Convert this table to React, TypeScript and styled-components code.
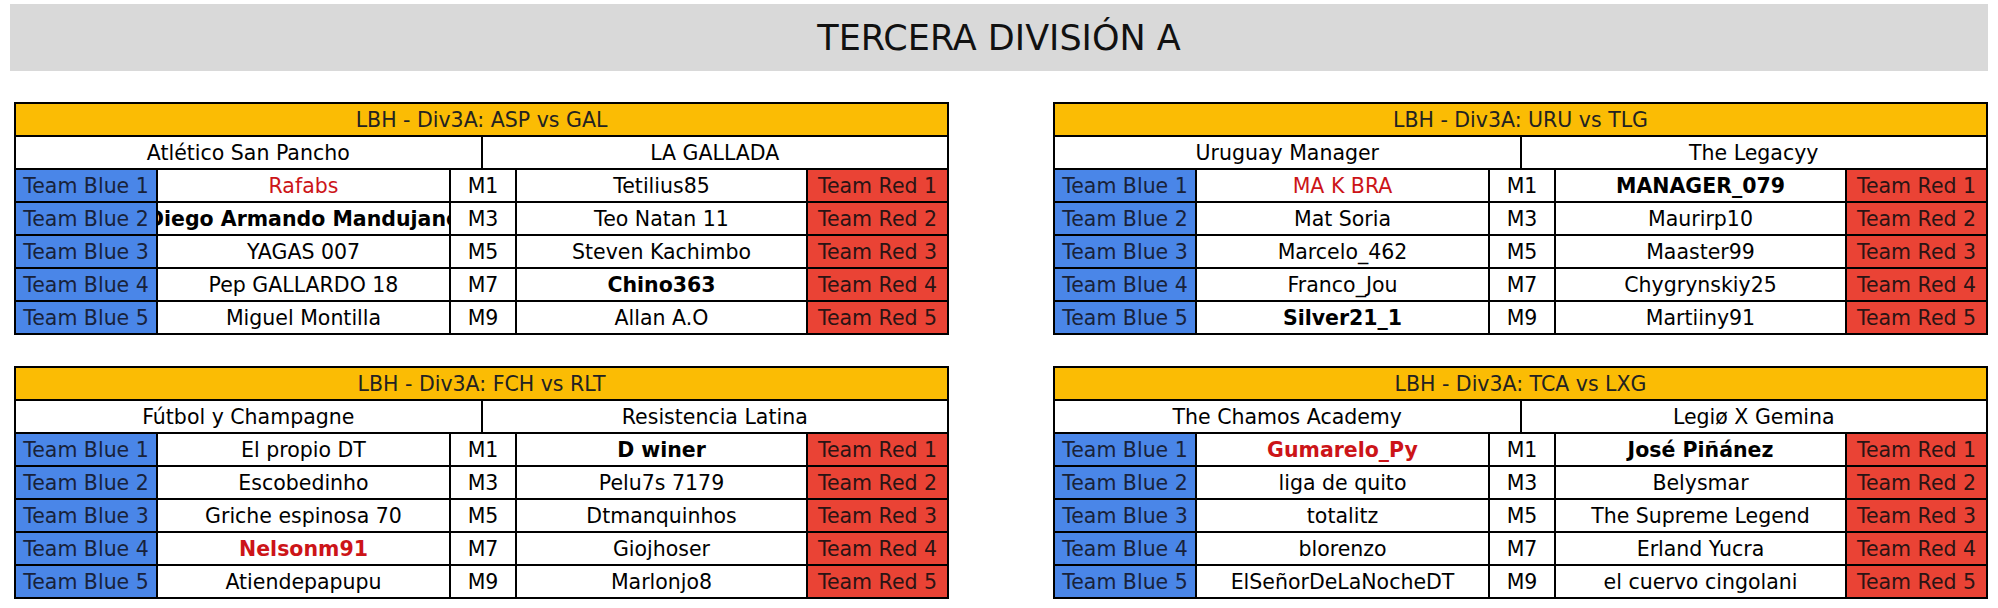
import React from 'react';
import styled, { createGlobalStyle } from 'styled-components';

const GlobalStyle = createGlobalStyle`
  html, body {
    margin: 0;
    padding: 0;
    background: #ffffff;
  }
  body {
    font-family: 'DejaVu Sans', Verdana, sans-serif;
    color: #000;
  }
`;

const Page = styled.div`
  width: 1998px;
  height: 608px;
  box-sizing: border-box;
  padding: 4px 10px 0 10px;
`;

const Banner = styled.div`
  height: 67px;
  background: #d9d9d9;
  display: flex;
  align-items: center;
  justify-content: center;
  font-size: 35px;
  color: #111;
`;

const Grid = styled.div`
  margin-top: 31px;
  padding-left: 4px;
  display: grid;
  grid-template-columns: 935px 935px;
  column-gap: 104px;
  row-gap: 31px;
`;

const Board = styled.div`
  display: grid;
  grid-template-columns: 140px 291px 64px 289px 139px;
  grid-auto-rows: 31px;
  gap: 2px;
  background: #000;
  border: 2px solid #000;
  font-size: 20.5px;
`;

const Cell = styled.div<{ $bg?: string; $color?: string; $bold?: boolean }>`
  display: flex;
  align-items: center;
  justify-content: center;
  overflow: hidden;
  white-space: nowrap;
  background: ${({ $bg }) => $bg || '#ffffff'};
  color: ${({ $color }) => $color || '#000'};
  font-weight: ${({ $bold }) => ($bold ? 700 : 400)};
`;

const TitleCell = styled(Cell)`
  grid-column: 1 / -1;
  background: #fbbc04;
  color: #222;
`;

const TeamRow = styled.div`
  grid-column: 1 / -1;
  display: grid;
  grid-template-columns: 1fr 1fr;
  gap: 2px;
`;

type Player = { name: string; bold?: boolean; red?: boolean };

type Match = {
  code: string;
  home: string;
  away: string;
  blue: Player[];
  redSide: Player[];
};

const BLUE = '#4a86e8';
const RED = '#ea4335';
const RED_TEXT = '#cc1418';

const matches: Match[] = [
  {
    code: 'ASP vs GAL',
    home: 'Atlético San Pancho',
    away: 'LA GALLADA',
    blue: [
      { name: 'Rafabs', red: true },
      { name: 'Diego Armando Mandujano', bold: true },
      { name: 'YAGAS 007' },
      { name: 'Pep GALLARDO 18' },
      { name: 'Miguel Montilla' },
    ],
    redSide: [
      { name: 'Tetilius85' },
      { name: 'Teo Natan 11' },
      { name: 'Steven Kachimbo' },
      { name: 'Chino363', bold: true },
      { name: 'Allan A.O' },
    ],
  },
  {
    code: 'URU vs TLG',
    home: 'Uruguay Manager',
    away: 'The Legacyy',
    blue: [
      { name: 'MA K BRA', red: true },
      { name: 'Mat Soria' },
      { name: 'Marcelo_462' },
      { name: 'Franco_Jou' },
      { name: 'Silver21_1', bold: true },
    ],
    redSide: [
      { name: 'MANAGER_079', bold: true },
      { name: 'Maurirp10' },
      { name: 'Maaster99' },
      { name: 'Chygrynskiy25' },
      { name: 'Martiiny91' },
    ],
  },
  {
    code: 'FCH vs RLT',
    home: 'Fútbol y Champagne',
    away: 'Resistencia Latina',
    blue: [
      { name: 'El propio DT' },
      { name: 'Escobedinho' },
      { name: 'Griche espinosa 70' },
      { name: 'Nelsonm91', bold: true, red: true },
      { name: 'Atiendepapupu' },
    ],
    redSide: [
      { name: 'D winer', bold: true },
      { name: 'Pelu7s 7179' },
      { name: 'Dtmanquinhos' },
      { name: 'Giojhoser' },
      { name: 'Marlonjo8' },
    ],
  },
  {
    code: 'TCA vs LXG',
    home: 'The Chamos Academy',
    away: 'Legiø X Gemina',
    blue: [
      { name: 'Gumarelo_Py', bold: true, red: true },
      { name: 'liga de quito' },
      { name: 'totalitz' },
      { name: 'blorenzo' },
      { name: 'ElSeñorDeLaNocheDT' },
    ],
    redSide: [
      { name: 'José Piñánez', bold: true },
      { name: 'Belysmar' },
      { name: 'The Supreme Legend' },
      { name: 'Erland Yucra' },
      { name: 'el cuervo cingolani' },
    ],
  },
];

const slots = ['M1', 'M3', 'M5', 'M7', 'M9'];

function PlayerCell({ p }: { p: Player }) {
  return (
    <Cell $bold={p.bold} $color={p.red ? RED_TEXT : undefined}>
      {p.name}
    </Cell>
  );
}

function MatchBoard({ m }: { m: Match }) {
  return (
    <Board>
      <TitleCell>LBH - Div3A: {m.code}</TitleCell>
      <TeamRow>
        <Cell>{m.home}</Cell>
        <Cell>{m.away}</Cell>
      </TeamRow>
      {slots.map((slot, i) => (
        <React.Fragment key={slot}>
          <Cell $bg={BLUE} $color="#18223a">Team Blue {i + 1}</Cell>
          <PlayerCell p={m.blue[i]} />
          <Cell>{slot}</Cell>
          <PlayerCell p={m.redSide[i]} />
          <Cell $bg={RED} $color="#2a1414">Team Red {i + 1}</Cell>
        </React.Fragment>
      ))}
    </Board>
  );
}

export default function App() {
  return (
    <>
      <GlobalStyle />
      <Page>
        <Banner>TERCERA DIVISIÓN A</Banner>
        <Grid>
          {matches.map((m) => (
            <MatchBoard key={m.code} m={m} />
          ))}
        </Grid>
      </Page>
    </>
  );
}
